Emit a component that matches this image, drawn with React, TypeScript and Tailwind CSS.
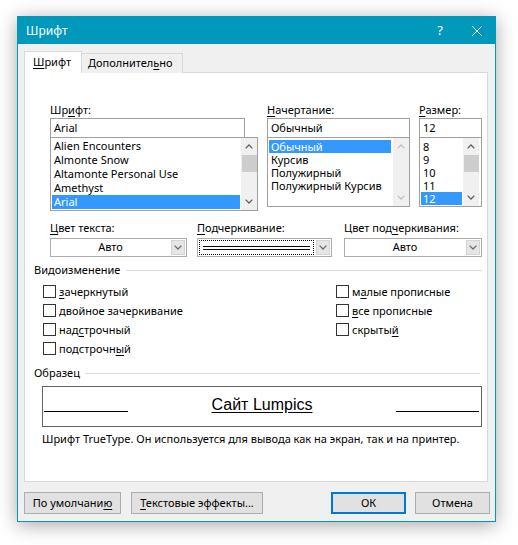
import React from 'react';

// accelerator-key underline
function U({ children }: { children: React.ReactNode }) {
  return <span className="underline underline-offset-[2px] decoration-[1px]">{children}</span>;
}

function Chevron({ up = false, color = '#5f5f5f' }: { up?: boolean; color?: string }) {
  return (
    <svg width="8" height="5" viewBox="0 0 8 5" className={up ? 'rotate-180' : ''}>
      <path d="M0.6 0.6 L4 4 L7.4 0.6" fill="none" stroke={color} strokeWidth="1.3" />
    </svg>
  );
}

function ScrollBar({ disabled = false }: { disabled?: boolean }) {
  const c = disabled ? '#c2c2c2' : '#5f5f5f';
  return (
    <div className="w-[16px] h-full bg-[#f0f0f0] flex flex-col items-center">
      <div className="h-[17px] w-full flex items-center justify-center">
        <Chevron up color={c} />
      </div>
      {!disabled && <div className="w-[15px] h-[17px] bg-[#cdcdcd]" />}
      <div className="flex-1" />
      <div className="h-[17px] w-full flex items-center justify-center">
        <Chevron color={c} />
      </div>
    </div>
  );
}

function Dropdown({ width, children }: { width: string; children: React.ReactNode }) {
  return (
    <div className={`${width} h-[19px] border border-[#acacac] bg-white flex`}>
      <div className="flex-1 flex items-center justify-center">{children}</div>
      <div className="w-[14px] m-px bg-[#e6e6e6] border border-[#d4d4d4] flex items-center justify-center">
        <Chevron color="#6a6a6a" />
      </div>
    </div>
  );
}

function Check({ children }: { children: React.ReactNode }) {
  return (
    <div className="h-[19px] flex items-center gap-[3px]">
      <div className="w-[13px] h-[13px] border border-[#333333] bg-white" />
      <span className="leading-[14px]">{children}</span>
    </div>
  );
}

const fonts = ['Alien Encounters', 'Almonte Snow', 'Altamonte Personal Use', 'Amethyst', 'Arial'];
const styles = ['Обычный', 'Курсив', 'Полужирный', 'Полужирный Курсив'];
const sizes = ['8', '9', '10', '11', '12'];

export default function App() {
  return (
    <div className="w-[518px] h-[545px] bg-white pt-[16px] pl-[17px] font-['Noto_Sans',sans-serif] text-[11px] text-black">
      <div className="w-[479px] h-[506px] border border-[#0099bc] bg-[#f0f0f0] shadow-[0_3px_18px_rgba(0,0,0,0.35)] flex flex-col">
        {/* title bar */}
        <div className="h-[27px] bg-[#0099bc] flex items-center pl-[8px] pr-[13px] text-white">
          <span className="text-[12px] flex-1">Шрифт</span>
          <span className="text-[13px] leading-none">?</span>
          <svg width="10" height="10" viewBox="0 0 10 10" className="ml-[29px]">
            <path d="M0 0 L10 10 M10 0 L0 10" stroke="white" strokeWidth="1" />
          </svg>
        </div>

        <div className="pl-[6px] pt-[7px]">
          {/* tabs */}
          <div className="flex items-end -mb-px">
            <div className="relative z-10 h-[22px] w-[58px] bg-white border-t border-l border-r border-[#d9d9d9] pl-[8px] leading-[20px]">
              <U>Ш</U>рифт
            </div>
            <div className="h-[20px] w-[101px] bg-[#f0f0f0] border-t border-r border-[#d9d9d9] pl-[6px] leading-[18px]">
              Дополнител<U>ь</U>но
            </div>
          </div>

          {/* panel */}
          <div className="w-[464px] h-[410px] bg-white border border-[#d9d9d9] pl-[9px] pr-[5px] pt-[29px]">
            <div className="ml-[16px] flex items-start">
              <div className="w-[208px]">
                <div className="h-[16px] leading-[16px]">
                  Шр<U>и</U>фт:
                </div>
                <div className="w-[195px] h-[20px] border border-[#a0a0a0] px-[3px] leading-[18px]">Arial</div>
                <div className="-mt-px h-[74px] border border-[#a0a0a0] flex">
                  <div className="w-[190px] px-px pt-px">
                    {fonts.map((f) => (
                      <div
                        key={f}
                        className={`h-[14px] leading-[14px] pl-[2px] ${f === 'Arial' ? 'bg-[#3399ff] text-white' : ''}`}
                      >
                        {f}
                      </div>
                    ))}
                  </div>
                  <ScrollBar />
                </div>
              </div>

              <div className="w-[143px] ml-[9px]">
                <div className="h-[16px] leading-[16px]">
                  <U>Н</U>ачертание:
                </div>
                <div className="h-[20px] border border-[#a0a0a0] px-[3px] leading-[18px]">Обычный</div>
                <div className="-mt-px h-[70px] border border-[#a0a0a0] flex">
                  <div className="w-[123px] pl-px pt-[2px]">
                    {styles.map((s) => (
                      <div
                        key={s}
                        className={`h-[13px] leading-[13px] pl-[2px] ${s === 'Обычный' ? 'bg-[#3399ff] text-white' : ''}`}
                      >
                        {s}
                      </div>
                    ))}
                  </div>
                  <div className="ml-[2px] h-full">
                    <ScrollBar disabled />
                  </div>
                </div>
              </div>

              <div className="w-[63px] ml-[9px]">
                <div className="h-[16px] leading-[16px]">
                  <U>Р</U>азмер:
                </div>
                <div className="h-[20px] border border-[#a0a0a0] px-[3px] leading-[18px]">12</div>
                <div className="-mt-px h-[70px] border border-[#a0a0a0] flex">
                  <div className="w-[42px] pl-px pt-[2px]">
                    {sizes.map((s) => (
                      <div
                        key={s}
                        className={`h-[13px] leading-[13px] pl-[2px] ${s === '12' ? 'bg-[#3399ff] text-white' : ''}`}
                      >
                        {s}
                      </div>
                    ))}
                  </div>
                  <div className="ml-px h-full">
                    <ScrollBar />
                  </div>
                </div>
              </div>
            </div>

            {/* colour / underline row */}
            <div className="ml-[16px] mt-[9px] flex items-start">
              <div>
                <div className="h-[16px] leading-[16px]">
                  <U>Ц</U>вет текста:
                </div>
                <div className="mt-[2px]">
                  <Dropdown width="w-[137px]">Авто</Dropdown>
                </div>
              </div>
              <div className="ml-[10px]">
                <div className="h-[16px] leading-[16px]">
                  <U>П</U>одчеркивание:
                </div>
                <div className="mt-[2px] w-[135px] h-[19px] border border-[#acacac] bg-white flex">
                  <div className="flex-1 m-px border border-dotted border-black flex flex-col justify-center px-[3px] gap-[2px]">
                    <div className="h-px bg-black" />
                    <div className="h-px bg-black" />
                  </div>
                  <div className="w-[14px] m-px bg-[#e6e6e6] border border-[#d4d4d4] flex items-center justify-center">
                    <Chevron color="#6a6a6a" />
                  </div>
                </div>
              </div>
              <div className="ml-[12px]">
                <div className="h-[16px] leading-[16px]">
                  Цвет под<U>ч</U>еркивания:
                </div>
                <div className="mt-[2px]">
                  <Dropdown width="w-[138px]">Авто</Dropdown>
                </div>
              </div>
            </div>

            {/* effects */}
            <div className="mt-[5px] h-[16px] flex items-center">
              <span className="leading-[16px]">Видоизменение</span>
              <div className="flex-1 h-px bg-[#dcdcdc] ml-[6px]" />
            </div>
            <div className="mt-[4px] ml-[9px] flex">
              <div className="w-[293px]">
                <Check>
                  <U>з</U>ачеркнутый
                </Check>
                <Check>двойное зачеркивание</Check>
                <Check>
                  над<U>с</U>трочный
                </Check>
                <Check>
                  подстрочн<U>ы</U>й
                </Check>
              </div>
              <div>
                <Check>
                  м<U>а</U>лые прописные
                </Check>
                <Check>
                  <U>в</U>се прописные
                </Check>
                <Check>
                  скрыты<U>й</U>
                </Check>
              </div>
            </div>

            {/* sample */}
            <div className="mt-[7px] h-[16px] flex items-center">
              <span className="leading-[16px]">Образец</span>
              <div className="flex-1 h-px bg-[#dcdcdc] ml-[5px] mr-[2px]" />
            </div>
            <div className="mt-[5px] ml-[8px] w-[440px] h-[41px] border border-[#646464] flex justify-between items-start pl-px pr-[2px]">
              <div className="mt-[24px] w-[84px] h-px bg-black" />
              <span className="mt-[9px] text-[16px] leading-[18px] font-['Liberation_Sans',Arial,sans-serif] underline underline-offset-[2px]">
                Сайт Lumpics
              </span>
              <div className="mt-[24px] w-[83px] h-px bg-black" />
            </div>
            <div className="mt-[5px] ml-[8px] leading-[14px]">
              Шрифт TrueType. Он используется для вывода как на экран, так и на принтер.
            </div>
          </div>

          {/* buttons */}
          <div className="mt-[10px] flex">
            <div className="w-[97px] h-[22px] bg-[#e1e1e1] border border-[#adadad] text-center leading-[20px]">
              По умолчани<U>ю</U>
            </div>
            <div className="ml-[10px] w-[132px] h-[22px] bg-[#e1e1e1] border border-[#adadad] text-center leading-[20px]">
              <U>Т</U>екстовые эффекты...
            </div>
            <div className="ml-[68px] w-[75px] h-[22px] bg-[#e1e1e1] border-2 border-[#0078d7] text-center leading-[18px]">
              ОК
            </div>
            <div className="ml-[9px] w-[75px] h-[22px] bg-[#e1e1e1] border border-[#adadad] text-center leading-[20px]">
              Отмена
            </div>
          </div>
        </div>
      </div>
    </div>
  );
}
